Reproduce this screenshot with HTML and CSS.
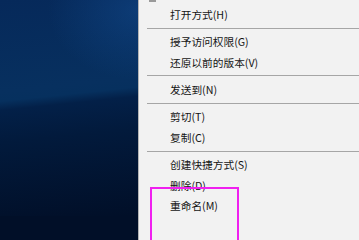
FILE: index.html
```html
<!DOCTYPE html>
<html lang="zh-CN">
<head>
<meta charset="utf-8">
<title>右键菜单</title>
<link rel="stylesheet" href="styles.css">
</head>
<body>
<div class="screen">
  <div class="desktop"></div>
  <div class="menu">
    <div class="icon-remnant"></div>
    <div class="item">打开方式(H)</div>
    <div class="sep"></div>
    <div class="item">授予访问权限(G)</div>
    <div class="item">还原以前的版本(V)</div>
    <div class="sep"></div>
    <div class="item">发送到(N)</div>
    <div class="sep"></div>
    <div class="item">剪切(T)</div>
    <div class="item">复制(C)</div>
    <div class="sep"></div>
    <div class="item">创建快捷方式(S)</div>
    <div class="item">删除(D)</div>
    <div class="item">重命名(M)</div>
    <div class="highlight"></div>
  </div>
</div>
</body>
</html>
```
FILE: styles.css
```css
html, body {
  margin: 0;
  padding: 0;
  width: 359px;
  min-height: 216px;
  height: 100%;
  overflow: hidden;
  background: #011028;
}
.screen {
  display: flex;
  width: 359px;
  height: 100vh;
  min-height: 216px;
}
.desktop {
  width: 138px;
  flex: none;
  background:
    radial-gradient(ellipse 90px 70px at 138px 10px, rgba(20, 80, 150, 0.45), rgba(20, 80, 150, 0) 100%),
    linear-gradient(174deg, #06295a 0%, #07305f 40%, #06305e 44%, #032048 48%, #021a3c 62%, #010f28 100%);
  background-size: 138px 216px;
  background-repeat: no-repeat;
  background-color: #010f28;
}
.menu {
  position: relative;
  flex: 1;
  background: #f2f2f2;
  border-left: 1px solid #b4b4b4;
  font-family: "Noto Sans CJK SC", "Noto Sans", sans-serif;
  font-size: 10.7px;
  color: #141414;
  overflow: hidden;
}
.icon-remnant {
  width: 7px;
  height: 1.5px;
  margin-left: 10px;
  background: #9a9a9a;
  margin-bottom: 3.3px;
}
.item {
  height: 20.4px;
  line-height: 20.4px;
  padding-left: 31px;
  white-space: nowrap;
}
.sep {
  height: 1px;
  margin: 2.5px 0 3.5px 8px;
  background: #a6a6a6;
}
.highlight {
  position: absolute;
  left: 11px;
  top: 187px;
  width: 85px;
  height: 80px;
  border: 2px solid #f020f0;
}
```
